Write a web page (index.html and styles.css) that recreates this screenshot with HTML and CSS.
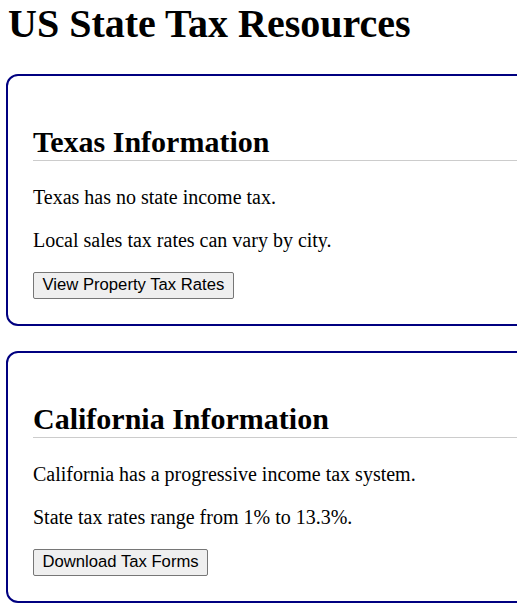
FILE: index.html
```html
<!DOCTYPE html>
<html lang="en">
<head>
<meta charset="utf-8">
<title>US State Tax Resources</title>
<link rel="stylesheet" href="styles.css">
</head>
<body>
<h1 class="page-title">US State Tax Resources</h1>
<section class="card">
  <h2 class="card-title">Texas Information</h2>
  <p class="card-text">Texas has no state income tax.</p>
  <p class="card-text">Local sales tax rates can vary by city.</p>
  <button class="card-button" type="button">View Property Tax Rates</button>
</section>
<section class="card">
  <h2 class="card-title">California Information</h2>
  <p class="card-text">California has a progressive income tax system.</p>
  <p class="card-text">State tax rates range from 1% to 13.3%.</p>
  <button class="card-button" type="button">Download Tax Forms</button>
</section>
</body>
</html>
```
FILE: styles.css
```css
html, body {
  overflow-x: hidden;
}
body {
  margin: 0;
  padding: 0 0 0 6px;
  font-family: "Liberation Serif", "Times New Roman", serif;
  color: #000;
  background: #fff;
}
.page-title {
  font-size: 40px;
  font-weight: bold;
  margin: 0 0 27px 2px;
}
.card {
  width: 600px;
  border: 2px solid #000080;
  border-radius: 12px;
  padding: 25px;
  margin: 0 0 25.5px 0;
}
.card-title {
  font-size: 30px;
  font-weight: bold;
  margin: 23.5px 0 25px 0;
  padding-bottom: 1px;
  border-bottom: 1px solid #cccccc;
}
.card-text {
  font-size: 20px;
  margin: 20px 0;
}
.card-button {
  font-family: "Liberation Sans", Arial, sans-serif;
  font-size: 16.67px;
  padding: 2.5px 8.5px;
  color: #000;
  background: #efefef;
  border: 1px solid #767676;
  border-radius: 2px;
  margin: 0;
}
```
